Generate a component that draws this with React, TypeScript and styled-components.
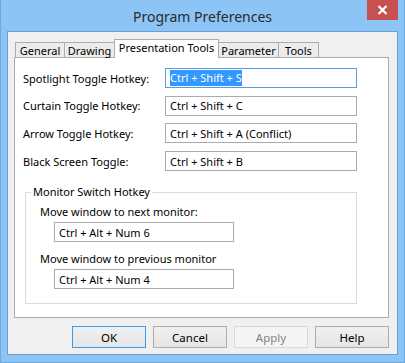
import React from 'react';
import styled, { createGlobalStyle } from 'styled-components';

const GlobalStyle = createGlobalStyle`
  html, body {
    margin: 0;
    padding: 0;
    background: #8cc4f5;
  }
  body {
    font-family: "Noto Sans", "Open Sans", sans-serif;
    font-size: 11px;
    color: #000;
  }
`;

const tabs = [
  { label: 'General', width: 50 },
  { label: 'Drawing', width: 51 },
  { label: 'Presentation Tools', width: 105 },
  { label: 'Parameter', width: 61 },
  { label: 'Tools', width: 41 },
];

const hotkeys = [
  { label: 'Spotlight Toggle Hotkey:', value: 'Ctrl + Shift + S', selected: true },
  { label: 'Curtain Toggle Hotkey:', value: 'Ctrl + Shift + C' },
  { label: 'Arrow Toggle Hotkey:', value: 'Ctrl + Shift + A (Conflict)' },
  { label: 'Black Screen Toggle:', value: 'Ctrl + Shift + B' },
];

const App: React.FC = () => {
  return (
    <>
      <GlobalStyle />
      <Window>
        <TitleBar>
          <Title>Program Preferences</Title>
          <CloseButton>
            <svg width="11" height="10" viewBox="0 0 11 10">
              <path d="M1.5 1 L9.5 9 M9.5 1 L1.5 9" stroke="#fff" strokeWidth="2.2" />
            </svg>
          </CloseButton>
        </TitleBar>
        <Client>
          <TabStrip>
            {tabs.map((t, i) => (
              <Tab key={t.label} $w={t.width} $active={i === 2} $first={i === 0}>
                {t.label}
              </Tab>
            ))}
          </TabStrip>
          <Panel>
            <HotkeyGrid>
              {hotkeys.map((h) => (
                <React.Fragment key={h.label}>
                  <Label>{h.label}</Label>
                  <Field $focused={!!h.selected}>
                    {h.selected ? <Selection>{h.value}</Selection> : h.value}
                  </Field>
                </React.Fragment>
              ))}
            </HotkeyGrid>
            <GroupBox>
              <Legend>Monitor Switch Hotkey</Legend>
              <GroupLabel $top={4}>Move window to next monitor:</GroupLabel>
              <SmallField>Ctrl + Alt + Num 6</SmallField>
              <GroupLabel $top={9}>Move window to previous monitor</GroupLabel>
              <SmallField>Ctrl + Alt + Num 4</SmallField>
            </GroupBox>
          </Panel>
          <ButtonRow>
            <Button $default>OK</Button>
            <Button>Cancel</Button>
            <Button disabled>Apply</Button>
            <Button>Help</Button>
          </ButtonRow>
        </Client>
      </Window>
    </>
  );
};

const Window = styled.div`
  width: 405px;
  height: 363px;
  box-sizing: border-box;
  background: #8cc4f5;
  border: 1px solid #6ea9dd;
  border-top: none;
  display: flex;
  flex-direction: column;
`;

const TitleBar = styled.div`
  position: relative;
  height: 31px;
  display: flex;
  align-items: center;
  justify-content: center;
`;

const Title = styled.div`
  font-size: 14px;
  color: #2b2b2b;
  margin-top: 1px;
`;

const CloseButton = styled.div`
  position: absolute;
  top: 0;
  right: 6px;
  width: 31px;
  height: 20px;
  background: #c75050;
  display: flex;
  align-items: center;
  justify-content: center;
`;

const Client = styled.div`
  margin: 0 6px 0 6px;
  height: 324px;
  box-sizing: border-box;
  border: 1px solid #6b9fd3;
  background: #f0f0f0;
  padding: 7px 8px 6px 6px;
  display: flex;
  flex-direction: column;
`;

const TabStrip = styled.div`
  display: flex;
  align-items: flex-end;
  height: 18px;
  padding-left: 1px;
`;

const Tab = styled.div<{ $w: number; $active: boolean; $first: boolean }>`
  position: relative;
  box-sizing: border-box;
  width: ${({ $w }) => $w}px;
  height: ${({ $active }) => ($active ? 19 : 15)}px;
  margin-left: ${({ $first }) => ($first ? 0 : -1)}px;
  margin-bottom: ${({ $active }) => ($active ? -1 : 0)}px;
  border: 1px solid #acacac;
  border-bottom: none;
  background: ${({ $active }) => ($active ? '#ffffff' : '#ececec')};
  z-index: ${({ $active }) => ($active ? 2 : 1)};
  display: flex;
  align-items: center;
  justify-content: center;
  padding-bottom: ${({ $active }) => ($active ? 3 : 0)}px;
  white-space: nowrap;
`;

const Panel = styled.div`
  height: 261px;
  box-sizing: border-box;
  border: 1px solid #acacac;
  background: #ffffff;
  padding: 10px 0 0 8px;
`;

const HotkeyGrid = styled.div`
  display: grid;
  grid-template-columns: 142px 192px;
  grid-auto-rows: 20px;
  row-gap: 7.7px;
  align-items: center;
`;

const Label = styled.div`
  white-space: nowrap;
`;

const Field = styled.div<{ $focused: boolean }>`
  box-sizing: border-box;
  height: 20px;
  border: 1px solid ${({ $focused }) => ($focused ? '#569de5' : '#ababab')};
  background: #fff;
  padding: 0 4px;
  display: flex;
  align-items: center;
  white-space: nowrap;
`;

const Selection = styled.span`
  background: #3399ff;
  color: #fff;
  line-height: 16px;
`;

const GroupBox = styled.fieldset`
  margin: 13px 0 0 2px;
  width: 332px;
  height: 120px;
  box-sizing: border-box;
  border: 1px solid #dcdcdc;
  padding: 0 0 0 14px;
`;

const Legend = styled.legend`
  padding: 0 2px;
  margin-left: -9px;
  line-height: 16px;
`;

const GroupLabel = styled.div<{ $top: number }>`
  margin-top: ${({ $top }) => $top}px;
  line-height: 16px;
  white-space: nowrap;
`;

const SmallField = styled.div`
  box-sizing: border-box;
  width: 180px;
  height: 20px;
  margin: 2px 0 0 14px;
  border: 1px solid #ababab;
  background: #fff;
  padding: 0 4px;
  display: flex;
  align-items: center;
`;

const ButtonRow = styled.div`
  display: flex;
  justify-content: flex-end;
  gap: 7px;
  margin-top: 8px;
`;

const Button = styled.button<{ $default?: boolean }>`
  box-sizing: border-box;
  width: 74px;
  height: 22px;
  font: inherit;
  font-size: 11.5px;
  color: #000;
  border: 1px solid ${({ $default }) => ($default ? '#3c9bea' : '#adadad')};
  background: linear-gradient(#f0f0f0, #e5e5e5);
  padding: 0;
  &:disabled {
    color: #838383;
    border-color: #d9d9d9;
    background: #f4f4f4;
  }
`;

export default App;
